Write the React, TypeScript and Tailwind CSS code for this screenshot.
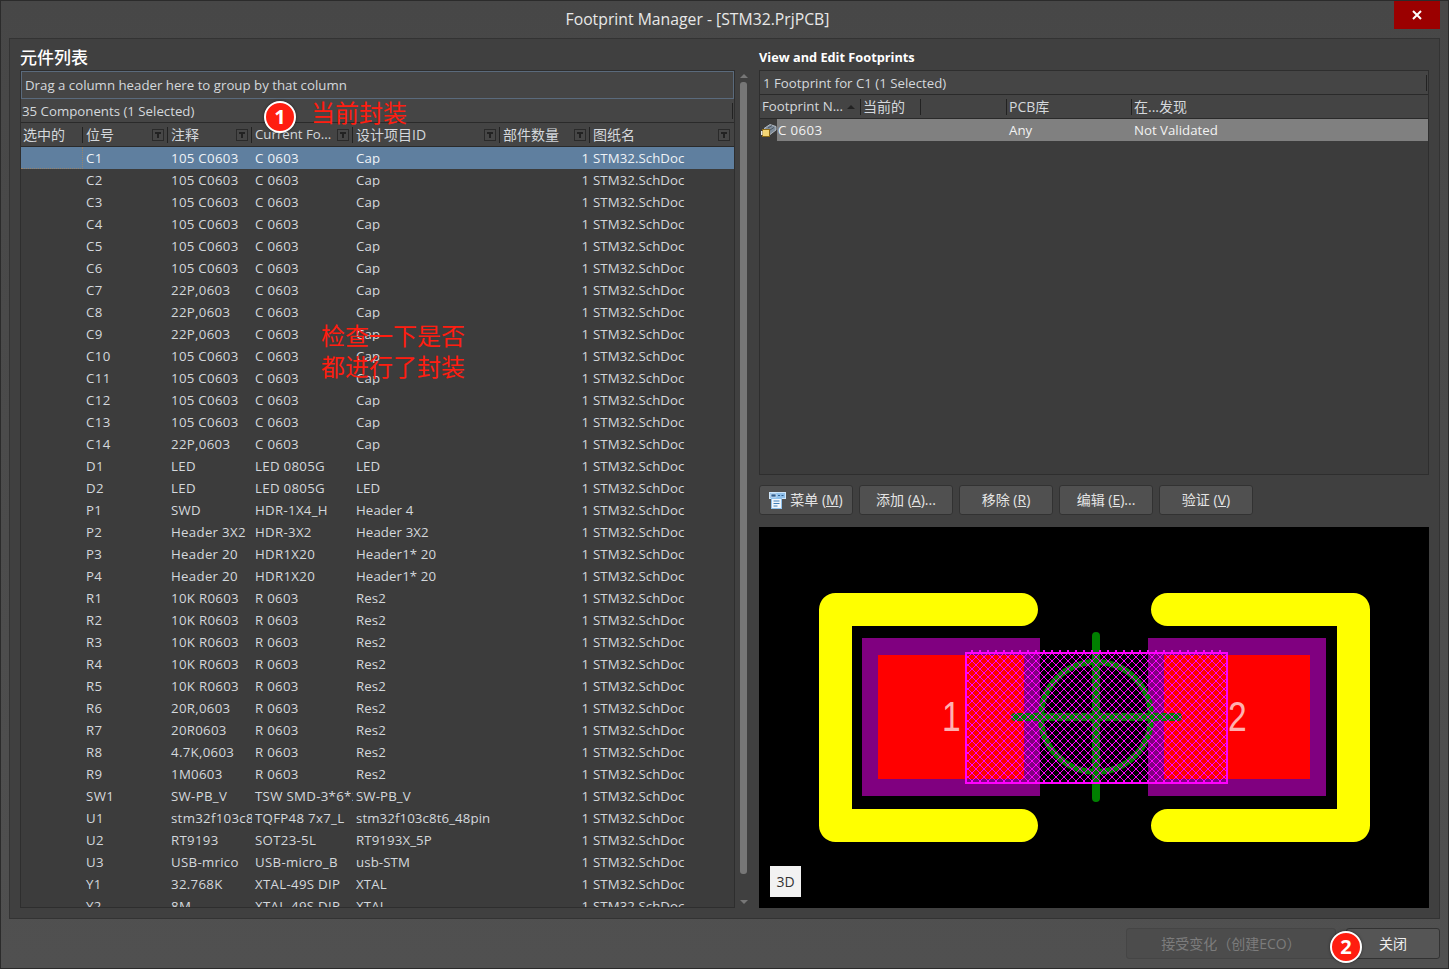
const rows: [string, string, string, string][] = [
  ["C1", "105 C0603", "C 0603", "Cap"],
  ["C2", "105 C0603", "C 0603", "Cap"],
  ["C3", "105 C0603", "C 0603", "Cap"],
  ["C4", "105 C0603", "C 0603", "Cap"],
  ["C5", "105 C0603", "C 0603", "Cap"],
  ["C6", "105 C0603", "C 0603", "Cap"],
  ["C7", "22P,0603", "C 0603", "Cap"],
  ["C8", "22P,0603", "C 0603", "Cap"],
  ["C9", "22P,0603", "C 0603", "Cap"],
  ["C10", "105 C0603", "C 0603", "Cap"],
  ["C11", "105 C0603", "C 0603", "Cap"],
  ["C12", "105 C0603", "C 0603", "Cap"],
  ["C13", "105 C0603", "C 0603", "Cap"],
  ["C14", "22P,0603", "C 0603", "Cap"],
  ["D1", "LED", "LED 0805G", "LED"],
  ["D2", "LED", "LED 0805G", "LED"],
  ["P1", "SWD", "HDR-1X4_H", "Header 4"],
  ["P2", "Header 3X2", "HDR-3X2", "Header 3X2"],
  ["P3", "Header 20", "HDR1X20", "Header1* 20"],
  ["P4", "Header 20", "HDR1X20", "Header1* 20"],
  ["R1", "10K R0603", "R 0603", "Res2"],
  ["R2", "10K R0603", "R 0603", "Res2"],
  ["R3", "10K R0603", "R 0603", "Res2"],
  ["R4", "10K R0603", "R 0603", "Res2"],
  ["R5", "10K R0603", "R 0603", "Res2"],
  ["R6", "20R,0603", "R 0603", "Res2"],
  ["R7", "20R0603", "R 0603", "Res2"],
  ["R8", "4.7K,0603", "R 0603", "Res2"],
  ["R9", "1M0603", "R 0603", "Res2"],
  ["SW1", "SW-PB_V", "TSW SMD-3*6*2", "SW-PB_V"],
  ["U1", "stm32f103c8t6", "TQFP48 7x7_L", "stm32f103c8t6_48pin"],
  ["U2", "RT9193", "SOT23-5L", "RT9193X_5P"],
  ["U3", "USB-mrico", "USB-micro_B", "usb-STM"],
  ["Y1", "32.768K", "XTAL-49S DIP", "XTAL"],
  ["Y2", "8M", "XTAL-49S DIP", "XTAL"],
];

// one 8x8 tile of the courtyard hatch, drawn pixel by pixel
const hatchTile = Array.from({ length: 8 }, (_, i) => `M${i} ${i}h1v1h-1zM${7 - i} ${i}h1v1h-1z`).join("");

function FilterIcon() {
  return (
    <svg width="12" height="12" viewBox="0 0 12 12" className="mr-[4px] shrink-0">
      <rect x="0.5" y="0.5" width="11" height="11" fill="#474747" stroke="#2a2a2a" />
      <path d="M3 3h6v2H7v4H5V5H3z" fill="#222" />
    </svg>
  );
}

function HeaderCell({ w, label, filter, pad = "pl-[3px]" }: { w: string; label: string; filter?: boolean; pad?: string }) {
  return (
    <div className={`${w} ${pad} relative flex h-full shrink-0 items-center justify-between`}>
      <span className="whitespace-nowrap pt-[1px] text-[14px]">{label}</span>
      {filter && <FilterIcon />}
      <div className="absolute right-0 top-[4px] h-[16px] w-px bg-[#222]" />
    </div>
  );
}

function Row({ r, selected }: { r: [string, string, string, string]; selected: boolean }) {
  return (
    <div className={`flex h-[22px] shrink-0 items-center whitespace-nowrap ${selected ? "bg-[#5f7f9f] text-[#eef2f6]" : ""}`}>
      <div className={`h-full w-[62px] shrink-0 ${selected ? "border-b border-r border-dotted border-[#97836a]" : ""}`} />
      <div className="w-[85px] shrink-0 overflow-hidden pl-[3px] pt-[1px] tracking-[0.4px]">{r[0]}</div>
      <div className="w-[84px] shrink-0 overflow-hidden pl-[3px] pt-[1px] tracking-[0.3px]">{r[1]}</div>
      <div className="w-[101px] shrink-0 overflow-hidden pl-[3px] pt-[1px] tracking-[0.3px]">{r[2]}</div>
      <div className="w-[147px] shrink-0 overflow-hidden pl-[3px] pt-[1px] tracking-[0.1px]">{r[3]}</div>
      <div className="w-[90px] shrink-0 pr-[1px] pt-[1px] text-right">1</div>
      <div className="flex-1 overflow-hidden pl-[3px] pt-[1px] tracking-[0.05px]">STM32.SchDoc</div>
    </div>
  );
}

function Btn({ children, w = "w-[94px]" }: { children: React.ReactNode; w?: string }) {
  return (
    <button className={`${w} flex h-[30px] items-center justify-center rounded-[3px] border border-[#323232] bg-[#505050] text-[14px] text-[#e4e4e4]`}>
      {children}
    </button>
  );
}

function Badge({ n, className }: { n: number; className: string }) {
  return (
    <div className={`absolute flex h-[32px] w-[32px] items-center justify-center rounded-full border-2 border-white bg-[#ff1d10] text-[20px] font-bold text-white shadow-[0_0_3px_rgba(0,0,0,0.5)] ${className}`}>
      {n}
    </div>
  );
}

function Pcb() {
  return (
    <svg width="670" height="381" viewBox="759 527 670 381" className="block">
      <defs>
        <pattern id="hatch" width="8" height="8" patternUnits="userSpaceOnUse" x="1028" y="653">
          <path d={hatchTile} fill="#ff00ff" shapeRendering="crispEdges" />
        </pattern>
      </defs>
      <rect x="759" y="527" width="670" height="381" fill="#000" />
      <path d="M1021.5 609.5H835.5V825.5H1021.5" fill="none" stroke="#ffff00" strokeWidth="33" strokeLinecap="round" strokeLinejoin="round" />
      <path d="M1167.5 609.5H1353.5V825.5H1167.5" fill="none" stroke="#ffff00" strokeWidth="33" strokeLinecap="round" strokeLinejoin="round" />
      <rect x="862" y="638" width="178" height="158" fill="#800080" />
      <rect x="1148" y="638" width="178" height="158" fill="#800080" />
      <rect x="878" y="655" width="146" height="124" fill="#ff0000" />
      <rect x="1164" y="655" width="146" height="124" fill="#ff0000" />
      <text x="0" y="0" transform="translate(942 731) scale(0.8 1)" fontFamily="Liberation Sans" fontSize="42" fill="#ffb0b0">1</text>
      <text x="0" y="0" transform="translate(1228 731) scale(0.8 1)" fontFamily="Liberation Sans" fontSize="42" fill="#ffb0b0">2</text>
      <circle cx="1096" cy="717" r="55" fill="none" stroke="#008000" strokeWidth="6" />
      <path d="M1096 636V798M1015 717H1178" stroke="#008000" strokeWidth="8" strokeLinecap="round" />
      <rect x="966" y="653" width="261" height="130" fill="url(#hatch)" />
      <rect x="966" y="653" width="261" height="130" fill="none" stroke="#ff00ff" strokeWidth="2" />
      <path d="M971 651H1222" stroke="#ff00ff" strokeWidth="2" strokeDasharray="2 6" />
    </svg>
  );
}

export default function App() {
  return (
    <div className="relative flex h-[969px] w-[1449px] flex-col overflow-hidden border border-[#2b2b2b] bg-gradient-to-b from-[#474747] to-[#505050] font-['Open_Sans','Noto_Sans_CJK_SC',sans-serif] text-[13.25px] leading-none text-[#d4d8dc]">
      {/* title bar */}
      <div className="flex h-[37px] shrink-0 items-center justify-center pr-[54px] text-[15.75px] text-[#e8e8e8]">
        Footprint Manager - [STM32.PrjPCB]
      </div>
      <div className="absolute right-[8px] top-0 flex h-[28px] w-[46px] items-center justify-center bg-[#9b0000]">
        <svg width="10" height="10" viewBox="0 0 10 10"><path d="M1 1l8 8M9 1l-8 8" stroke="#fff" strokeWidth="2" /></svg>
      </div>

      <div className="mx-[8px] flex h-[881px] shrink-0 gap-[10px] border border-[#333] bg-[#404040] pl-[10px] pr-[9px]">
        {/* left list */}
        <div className="flex w-[729px] shrink-0 flex-col">
          <div className="flex h-[31px] shrink-0 items-end pb-[4px] text-[17px] font-medium text-white">元件列表</div>
          <div className="flex h-[838px] shrink-0 gap-[3px]">
            <div className="flex w-[715px] shrink-0 flex-col overflow-hidden border border-[#2e2e2e] bg-[#3c3c3c]">
              <div className="flex h-[28px] shrink-0 items-center border border-[#5a6a7c] bg-[#454545] pl-[3px] pt-[1px]">
                Drag a column header here to group by that column
              </div>
              <div className="flex h-[24px] shrink-0 items-center justify-between border-b border-[#2a2a2a] bg-[#454545] pl-[1px] pr-[1px]">
                <span className="pt-[2px]">35 Components (1 Selected)</span>
                <span className="h-[16px] w-px bg-[#222]" />
              </div>
              <div className="flex h-[24px] shrink-0 items-center border-b border-[#2a2a2a] bg-[#444]">
                <HeaderCell w="w-[62px]" label="选中的" pad="pl-[2px]" />
                <HeaderCell w="w-[85px]" label="位号" filter />
                <HeaderCell w="w-[84px]" label="注释" filter />
                <div className="relative flex h-full w-[101px] shrink-0 items-center justify-between pl-[3px]">
                  <span className="whitespace-nowrap pt-[1px]">Current Fo...</span>
                  <FilterIcon />
                  <div className="absolute right-0 top-[4px] h-[16px] w-px bg-[#222]" />
                </div>
                <HeaderCell w="w-[147px]" label="设计项目ID" filter />
                <HeaderCell w="w-[90px]" label="部件数量" filter />
                <div className="flex h-full flex-1 items-center justify-between pl-[3px]">
                  <span className="pt-[1px] text-[14px]">图纸名</span>
                  <FilterIcon />
                </div>
              </div>
              {rows.map((r, i) => (
                <Row key={r[0]} r={r} selected={i === 0} />
              ))}
            </div>
            {/* scrollbar */}
            <div className="flex w-[11px] shrink-0 flex-col items-center justify-between py-[4px]">
              <div className="h-0 w-0 border-x-[4px] border-b-[4px] border-x-transparent border-b-[#777]" />
              <div className="mb-[26px] mt-[4px] w-[7px] flex-1 rounded-[3px] bg-[#777]" />
              <div className="h-0 w-0 border-x-[4px] border-t-[4px] border-x-transparent border-t-[#777]" />
            </div>
          </div>
        </div>

        {/* right side */}
        <div className="flex w-[670px] shrink-0 flex-col">
          <div className="flex h-[31px] shrink-0 items-end pb-[6px] text-[12.75px] font-bold text-white">View and Edit Footprints</div>
          <div className="flex h-[405px] shrink-0 flex-col border border-[#2e2e2e] bg-[#3c3c3c]">
            <div className="flex h-[24px] shrink-0 items-center justify-between border-b border-[#2a2a2a] bg-[#454545] pl-[3px] pr-[1px]">
              <span className="pt-[2px]">1 Footprint for C1 (1 Selected)</span>
              <span className="h-[16px] w-px bg-[#222]" />
            </div>
            <div className="flex h-[24px] shrink-0 items-center border-b border-[#2a2a2a] bg-[#444]">
              <div className="relative flex h-full w-[101px] shrink-0 items-center pl-[2px]">
                <span className="whitespace-nowrap pt-[1px]">Footprint N...</span>
                <span className="ml-[4px] h-0 w-0 border-x-[4px] border-b-[4px] border-x-transparent border-b-[#222]" />
                <div className="absolute right-0 top-[4px] h-[16px] w-px bg-[#222]" />
              </div>
              <HeaderCell w="w-[60px]" label="当前的" pad="pl-[2px]" />
              <HeaderCell w="w-[86px]" label="" pad="pl-[2px]" />
              <HeaderCell w="w-[125px]" label="PCB库" pad="pl-[2px]" />
              <div className="pl-[2px] pt-[1px] text-[14px]">在...发现</div>
            </div>
            <div className="flex h-[22px] shrink-0 items-center">
              <svg width="17" height="15" viewBox="0 0 17 15" className="shrink-0">
                <path d="M4 5.5L10 1.5L16 3.5V7L10 11.5L8 9.5V7z" fill="#7d8b99" stroke="#c4ccd4" strokeWidth="0.8" />
                <path d="M8 5l4-2.5M10 7l4-2.5" stroke="#3d4650" strokeWidth="0.8" />
                <rect x="2.5" y="6.5" width="7" height="7" fill="#f4d675" stroke="#8c6a18" />
                <rect x="1" y="8" width="1.5" height="4" fill="#e8e8e8" />
              </svg>
              <div className="flex h-full flex-1 items-center whitespace-nowrap bg-[#808080] pt-[1px] text-[#f2f2f2]">
                <div className="w-[232px] pl-[1px] tracking-[0.4px]">C 0603</div>
                <div className="w-[125px]">Any</div>
                <div>Not Validated</div>
              </div>
            </div>
          </div>

          <div className="flex h-[52px] shrink-0 items-start gap-[6px] pt-[10px]">
            <Btn>
              <svg width="17" height="17" viewBox="0 0 17 17" className="mr-[4px]">
                <rect x="0.5" y="0.5" width="16" height="6" fill="#8fc0ea" stroke="#cfe6fa" />
                <rect x="2" y="2" width="5" height="3" fill="#2f5f90" stroke="#f0f6fc" strokeWidth="0.6" />
                <path d="M9 3.5h2M12.5 3.5h2" stroke="#2f5f90" />
                <rect x="2.5" y="6.5" width="10" height="10" fill="#f0f6fc" stroke="#8fc0ea" />
                <path d="M4.5 9h6M4.5 11.5h6M4.5 14h4" stroke="#3f7fb8" />
              </svg>
              <span>菜单 (<u>M</u>)</span>
            </Btn>
            <Btn>添加 (<u>A</u>)...</Btn>
            <Btn>移除 (<u>R</u>)</Btn>
            <Btn>编辑 (<u>E</u>)...</Btn>
            <Btn>验证 (<u>V</u>)</Btn>
          </div>

          <div className="relative h-[381px] shrink-0 bg-black">
            <Pcb />
            <div className="absolute left-[11px] top-[339px] flex h-[31px] w-[31px] items-center justify-center bg-[#f2f2f2] text-[14px] text-[#333]">3D</div>
          </div>
        </div>
      </div>

      {/* footer */}
      <div className="flex flex-1 items-start justify-end gap-[10px] pr-[8px] pt-[9px]">
        <button className="flex h-[31px] w-[210px] items-center justify-center rounded-[3px] border border-[#454545] bg-[#4c4c4c] text-[14px] text-[#7c7c7c]">接受变化（创建ECO）</button>
        <button className="flex h-[31px] w-[94px] items-center justify-center rounded-[3px] border border-[#323232] bg-[#555] text-[14px] text-[#eee]">关闭</button>
      </div>

      {/* red annotations over the screenshot */}
      <Badge n={1} className="left-[263px] top-[100px]" />
      <div className="absolute left-[310px] top-[98px] text-[24px] leading-[28px] text-[#ff1d10]">当前封装</div>
      <div className="absolute left-[320px] top-[319px] text-[24px] leading-[31px] text-[#ff1d10]">
        检查一下是否
        <br />
        都进行了封装
      </div>
      <Badge n={2} className="left-[1329px] top-[930px]" />
    </div>
  );
}
